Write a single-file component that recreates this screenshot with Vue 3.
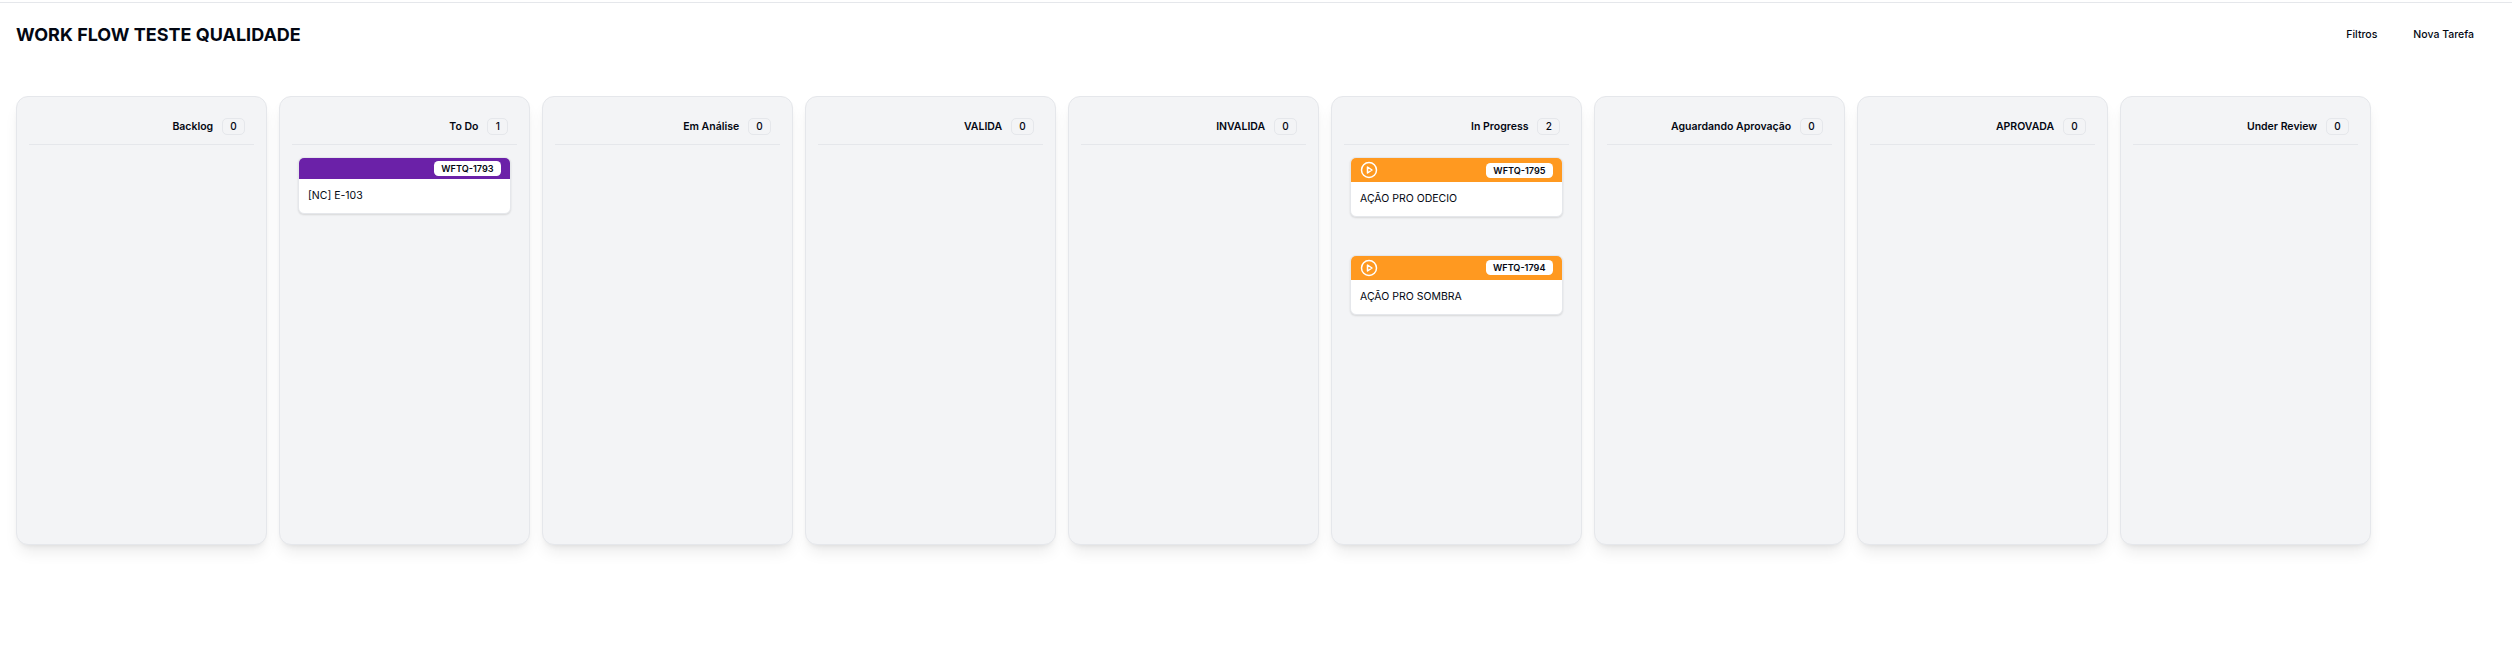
<script setup>
const columns = [
  { name: 'Backlog', cards: [] },
  { name: 'To Do', cards: [{ id: 'WFTQ-1793', title: '[NC] E-103', kind: 'purple' }] },
  { name: 'Em Análise', cards: [] },
  { name: 'VALIDA', cards: [] },
  { name: 'INVALIDA', cards: [] },
  {
    name: 'In Progress',
    cards: [
      { id: 'WFTQ-1795', title: 'AÇÃO PRO ODECIO', kind: 'orange' },
      { id: 'WFTQ-1794', title: 'AÇÃO PRO SOMBRA', kind: 'orange' },
    ],
  },
  { name: 'Aguardando Aprovação', cards: [] },
  { name: 'APROVADA', cards: [] },
  { name: 'Under Review', cards: [] },
]
</script>

<template>
  <main class="page">
    <header class="topbar">
      <h1>WORK FLOW TESTE QUALIDADE</h1>
      <nav>
        <button type="button">Filtros</button>
        <button type="button">Nova Tarefa</button>
      </nav>
    </header>
    <div class="board">
      <section v-for="col in columns" :key="col.name" class="column">
        <div class="column-head">
          <h2>{{ col.name }}</h2>
          <span class="count">{{ col.cards.length }}</span>
        </div>
        <div class="cards">
          <article v-for="card in col.cards" :key="card.id" class="card">
            <div class="card-head" :class="card.kind">
              <svg v-if="card.kind === 'orange'" class="play" viewBox="0 0 24 24">
                <circle cx="12" cy="12" r="10" />
                <path d="M10 8l6 4-6 4z" />
              </svg>
              <span class="tag">{{ card.id }}</span>
            </div>
            <p>{{ card.title }}</p>
          </article>
        </div>
      </section>
    </div>
  </main>
</template>

<style>
body {
  background: #fff;
}
</style>

<style scoped>
.page {
  box-sizing: border-box;
  height: 656px;
  padding-top: 2px;
  overflow: hidden;
  font-family: Inter, "Liberation Sans", sans-serif;
  color: #030712;
}
.topbar {
  box-sizing: border-box;
  height: 94px;
  border-top: 1px solid #e5e7eb;
  padding: 16px 38px 0 16px;
  display: flex;
  justify-content: space-between;
  align-items: flex-start;
}
h1 {
  margin: 0;
  font-size: 18px;
  line-height: 32px;
  font-weight: 700;
}
nav {
  display: flex;
  gap: 36px;
}
button {
  border: 0;
  padding: 0;
  background: none;
  font: 500 10.5px/32px Inter, "Liberation Sans", sans-serif;
  color: #030712;
}
.board {
  display: flex;
  gap: 12px;
  padding-left: 16px;
}
.column {
  box-sizing: border-box;
  flex: 0 0 251px;
  height: 449px;
  padding: 12px;
  border: 1px solid #e5e7eb;
  border-radius: 12px;
  background: #f3f4f6;
  box-shadow: 0 10px 15px -3px rgb(0 0 0 / 0.08), 0 4px 6px -4px rgb(0 0 0 / 0.1);
}
.column-head {
  box-sizing: border-box;
  height: 36px;
  padding: 9px 9px 0 0;
  border-bottom: 1px solid #e5e7eb;
  display: flex;
  justify-content: flex-end;
  align-items: flex-start;
  gap: 9px;
}
h2 {
  margin: 0;
  font-size: 10.5px;
  line-height: 17px;
  font-weight: 600;
}
.count {
  box-sizing: border-box;
  height: 17px;
  padding: 0 7.2px;
  border: 1px solid #e5e7eb;
  border-radius: 5px;
  font-size: 10px;
  line-height: 15px;
  font-weight: 500;
}
.cards {
  display: flex;
  flex-direction: column;
  gap: 37.8px;
  padding: 12px 6px 0;
}
.card {
  border: 1px solid #e5e7eb;
  border-radius: 6px;
  background: #fff;
  overflow: hidden;
  box-shadow: 0 1px 2px rgb(0 0 0 / 0.12);
}
.card-head {
  display: flex;
  align-items: center;
  padding: 0 9px;
}
.purple {
  height: 21px;
  background: #6b21a8;
}
.orange {
  height: 24px;
  background: #ff9920;
}
.play {
  width: 18px;
  height: 18px;
  fill: none;
  stroke: #fff;
  stroke-width: 2;
  stroke-linejoin: round;
}
.tag {
  height: 15px;
  margin-left: auto;
  padding: 0 7.5px;
  border-radius: 4.5px;
  background: #fff;
  font-size: 9.1px;
  line-height: 15px;
  font-weight: 600;
}
.card p {
  margin: 0;
  padding: 9px;
  font-size: 10.5px;
  line-height: 16px;
}
</style>
